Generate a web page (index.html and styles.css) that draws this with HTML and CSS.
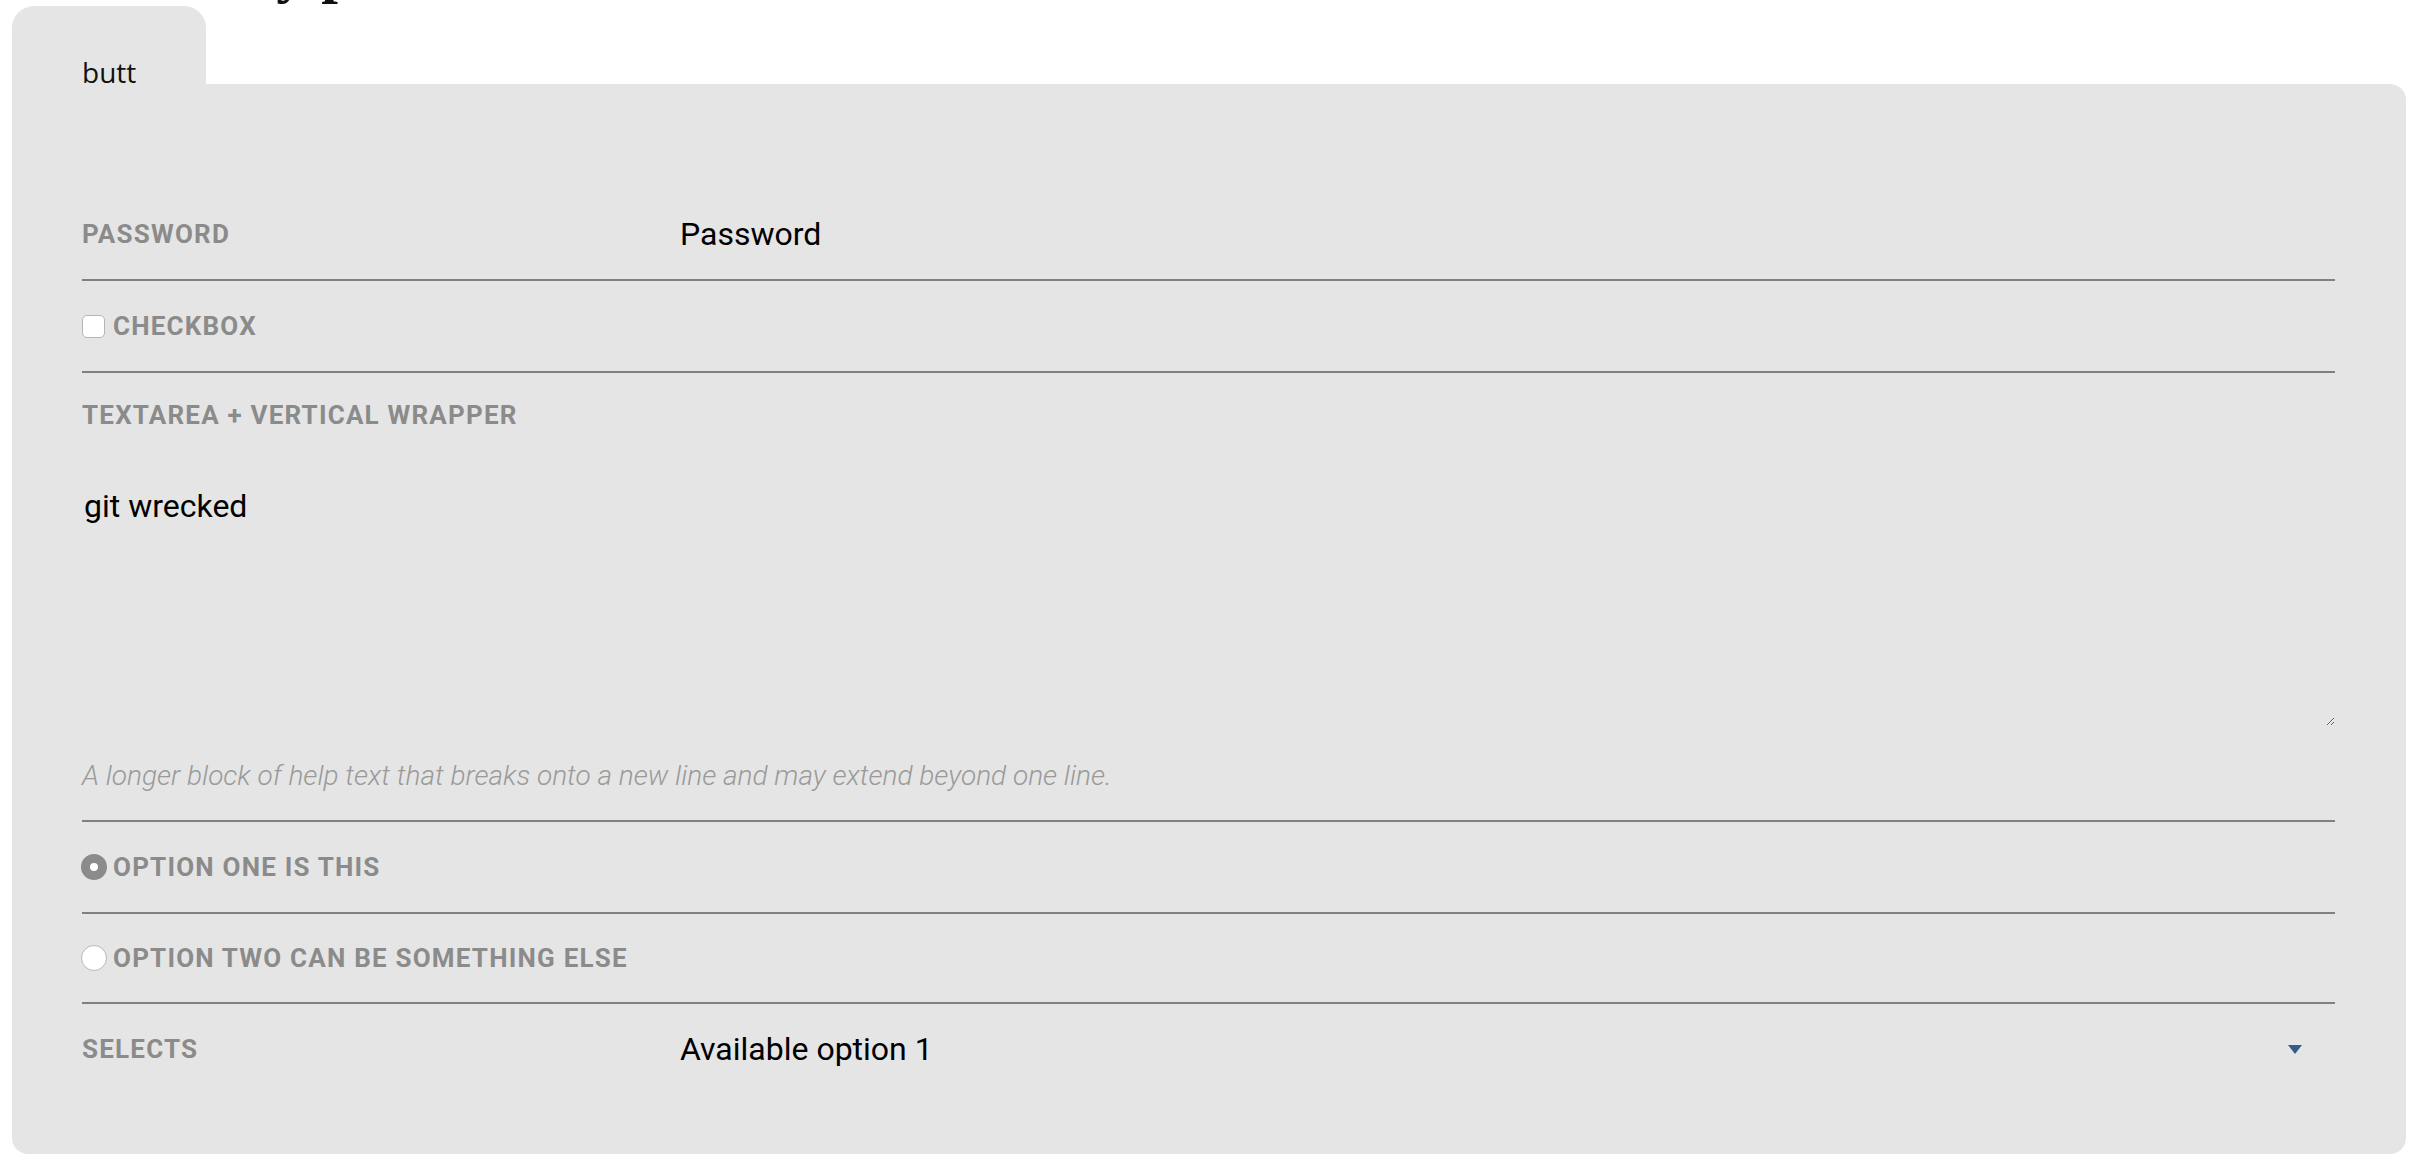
FILE: index.html
```html
<!DOCTYPE html>
<html lang="en">
<head>
<meta charset="utf-8">
<title>Form panel</title>
<link rel="stylesheet" href="styles.css">
</head>
<body>
<div class="page">
  <h1 class="title">Read-only panel</h1>
  <div class="tab">butt</div>
  <form class="panel">
    <div class="row">
      <label class="label" for="pw">Password</label>
      <input class="value-input" id="pw" type="text" value="Password">
    </div>
    <div class="row check-row">
      <input class="checkbox" id="cb" type="checkbox">
      <label class="label" for="cb">Checkbox</label>
    </div>
    <div class="row stack">
      <label class="label" for="ta">Textarea + vertical wrapper</label>
      <textarea class="textarea" id="ta">git wrecked</textarea>
      <p class="help">A longer block of help text that breaks onto a new line and may extend beyond one line.</p>
    </div>
    <div class="row check-row radio-row">
      <input class="radio" id="r1" type="radio" name="opt" checked>
      <label class="label" for="r1">Option one is this</label>
    </div>
    <div class="row check-row radio-row short">
      <input class="radio" id="r2" type="radio" name="opt">
      <label class="label" for="r2">Option two can be something else</label>
    </div>
    <div class="row last">
      <span class="label">Selects</span>
      <div class="select">
        <span class="select-value">Available option 1</span>
        <svg class="caret" width="14" height="9" viewBox="0 0 14 9"><path d="M0 0 H14 L7 9 Z" fill="#335c8c"/></svg>
      </div>
    </div>
  </form>
</div>
</body>
</html>
```

FILE: styles.css
```css
html, body {
  margin: 0;
  padding: 0;
  background: #ffffff;
}

.page {
  display: flex;
  flex-direction: column;
  align-items: flex-start;
  padding: 0 16px 15px 12px;
  font-family: Roboto, "Liberation Sans", sans-serif;
}

.title {
  margin: -59px 0 0 0;
  padding-left: 31px;
  height: 60px;
  font-family: "Liberation Serif", serif;
  font-weight: 700;
  font-size: 60px;
  line-height: 60px;
  color: #111;
  white-space: nowrap;
}

.tab {
  margin-top: 5px;
  box-sizing: border-box;
  height: 79px;
  padding: 51px 70px 0 70px;
  background: #e5e5e5;
  border-radius: 22px 22px 0 0;
  font-family: "Open Sans", sans-serif;
  font-size: 28px;
  line-height: 31px;
  color: #111;
}

.panel {
  align-self: stretch;
  margin: -1px 0 0 0;
  padding: 105px 71px 60px 70px;
  background: #e5e5e5;
  border-radius: 0 16px 16px 16px;
}

.row {
  display: grid;
  grid-template-columns: 598px 1fr;
  align-items: center;
  height: 90px;
  border-bottom: 2px solid #808080;
}

.row.last {
  border-bottom: none;
}

.label {
  font-family: Roboto, sans-serif;
  font-weight: 700;
  font-size: 26px;
  line-height: 26px;
  text-transform: uppercase;
  color: #8b8b8b;
  letter-spacing: 1.2px;
}

.value-input {
  border: none;
  background: transparent;
  padding: 0;
  margin: 0;
  font-family: Roboto, sans-serif;
  font-size: 32px;
  color: #000;
  outline: none;
}

.check-row {
  display: flex;
  gap: 8px;
}

.radio-row {
  gap: 6px;
}

.check-row.short {
  height: 88px;
}

.checkbox {
  appearance: none;
  margin: 0;
  width: 23px;
  height: 23px;
  box-sizing: border-box;
  border: 1.5px solid #b5b5b5;
  border-radius: 5px;
  background: #fff;
}

.radio {
  appearance: none;
  margin: 0 0 0 -1px;
  width: 26px;
  height: 26px;
  box-sizing: border-box;
  border: 1.5px solid #b8b8b8;
  border-radius: 50%;
  background: #fff;
}

.radio:checked {
  border: 9.5px solid #8b8b8b;
  background: #fff;
}

.stack {
  display: flex;
  flex-direction: column;
  align-items: stretch;
  height: auto;
  padding: 29px 0 28px 0;
}

.textarea {
  display: block;
  margin: 37px 0 0 0;
  height: 261px;
  box-sizing: border-box;
  padding: 22px 2px;
  border: none;
  background: transparent;
  font-family: Roboto, sans-serif;
  font-size: 32px;
  color: #000;
  outline: none;
}

.help {
  margin: 34px 0 0 0;
  font-family: Roboto, sans-serif;
  font-weight: 300;
  font-style: italic;
  font-size: 28px;
  line-height: 32px;
  color: #9a9a9a;
}

.select {
  display: flex;
  align-items: center;
  justify-content: space-between;
  padding-right: 33px;
}

.select-value {
  font-family: Roboto, sans-serif;
  font-size: 32px;
  color: #000;
}

.caret {
  display: block;
}
```
